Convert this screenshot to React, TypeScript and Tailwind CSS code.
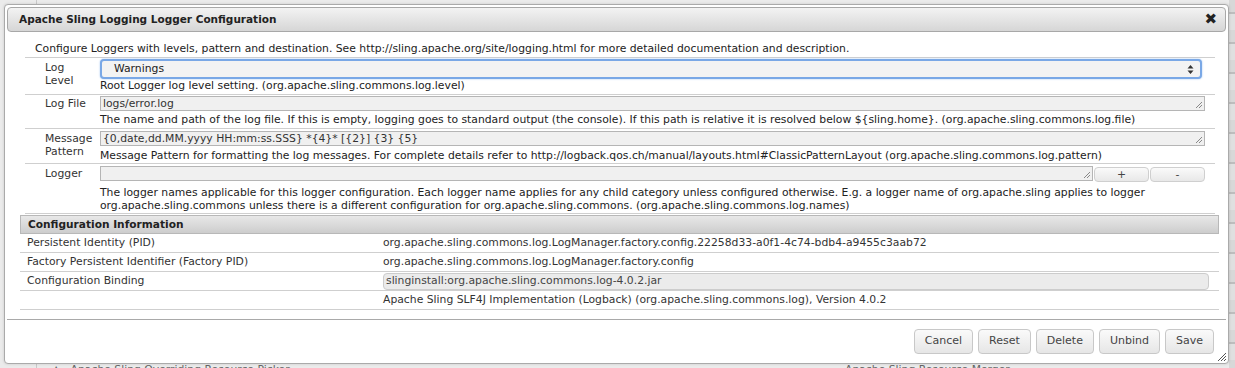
import React from 'react';

const Grip = () => (
  <svg width="9" height="9" viewBox="0 0 9 9" className="absolute right-[1px] bottom-[1px]">
    <path d="M8 2 L2 8 M8 5 L5 8" stroke="#888" strokeWidth="1" />
  </svg>
);

const TextBox = ({ value, className = '' }: { value?: string; className?: string }) => (
  <div className={`relative h-[15px] border border-[#b5b5b5] bg-[#f0f0f0] pl-[2px] leading-[13px] text-[#333] ${className}`}>
    {value}
    <Grip />
  </div>
);

const Btn = ({ label }: { label: string }) => (
  <button className="h-[25px] px-[10px] rounded-[4px] border border-[#c8c8c8] bg-gradient-to-b from-[#fafafa] to-[#e6e6e6] text-[#444] text-[11px]">
    {label}
  </button>
);

const Row = ({ label, labelPad, children }: { label: React.ReactNode; labelPad: string; children: React.ReactNode }) => (
  <div className="flex border-t border-[#cfcfcf]">
    <div className={`w-[75px] shrink-0 pl-[20px] leading-[13px] text-[#333] ${labelPad}`}>{label}</div>
    <div className="flex-1 pr-[10px]">{children}</div>
  </div>
);

const InfoRow = ({ label, children }: { label: string; children?: React.ReactNode }) => (
  <div className="flex border-b border-[#cfcfcf] h-[19px] items-center">
    <div className="w-[363px] pl-[7px] text-[#333]">{label}</div>
    <div className="flex-1 text-[#333]">{children}</div>
  </div>
);

export default function App() {
  return (
    <div className="relative w-[1235px] h-[368px] overflow-hidden bg-[#ebebeb] font-['DejaVu_Sans',sans-serif] text-[10.8px]">
      {/* page behind the dialog */}
      <div className="absolute left-[36px] top-0 w-px h-full bg-[#c9c9c9]" />
      <div className="absolute right-0 top-0 w-[6px] h-full bg-[repeating-linear-gradient(to_bottom,#d8d8d8_0px,#d8d8d8_12px,#bdbdbd_12px,#bdbdbd_14px,#e0e0e0_14px,#e0e0e0_30px)]" />
      <div className="absolute left-[52px] top-[363px] text-[#666] whitespace-nowrap leading-[13px]">▲ &nbsp; Apache Sling Overriding Resource Picker</div>
      <div className="absolute left-[845px] top-[363px] text-[#666] whitespace-nowrap leading-[13px]">Apache Sling Resource Merger</div>

      {/* dialog */}
      <div className="absolute left-[4px] top-[4px] w-[1225px] h-[360px] bg-white border border-[#aaaaaa] rounded-[4px] p-[2px] flex flex-col shadow-[0_0_3px_rgba(0,0,0,0.15)]">
        <div className="h-[25px] shrink-0 flex items-center justify-between rounded-[4px] border border-[#a8a8a8] bg-gradient-to-b from-[#f3f3f3] to-[#d6d6d6] pl-[11px] pr-[8px]">
          <span className="font-bold text-[10.5px] text-[#222]">Apache Sling Logging Logger Configuration</span>
          <span className="text-[15px] font-bold text-[#222] leading-none">✖</span>
        </div>

        <div className="pl-[18px] pr-[11px]">
          <div className="pl-[10px] pt-[10px] pb-[2px] leading-[13px] text-[#222]">
            Configure Loggers with levels, pattern and destination. See http://sling.apache.org/site/logging.html for more detailed documentation and description.
          </div>

          <Row label={<>Log<br />Level</>} labelPad="pt-[3px]">
            <div className="pt-[1px]">
              <div className="h-[20px] mr-[3px] rounded-[4px] border-2 border-[#7aa8e6] shadow-[0_0_2px_#9cc2f0] bg-[#f3f3f3] flex items-center justify-between pl-[12px] pr-[6px] text-[#222]">
                <span>Warnings</span>
                <svg width="7" height="11" viewBox="0 0 7 11">
                  <path d="M3.5 1 L6.5 4.5 L0.5 4.5 Z M3.5 10 L6.5 6.5 L0.5 6.5 Z" fill="#333" />
                </svg>
              </div>
            </div>
            <div className="leading-[13px] pb-[2px] text-[#222]">Root Logger log level setting. (org.apache.sling.commons.log.level)</div>
          </Row>

          <Row label="Log File" labelPad="pt-[2px]">
            <div className="pt-[1px]"><TextBox value="logs/error.log" /></div>
            <div className="leading-[13px] pt-[2px] pb-[2px] text-[#222]">
              The name and path of the log file. If this is empty, logging goes to standard output (the console). If this path is relative it is resolved below ${'{'}sling.home{'}'}. (org.apache.sling.commons.log.file)
            </div>
          </Row>

          <Row label={<>Message<br />Pattern</>} labelPad="pt-[3px]">
            <div className="pt-[2px]"><TextBox value="{0,date,dd.MM.yyyy HH:mm:ss.SSS} *{4}* [{2}] {3} {5}" /></div>
            <div className="leading-[13px] pt-[3px] pb-[1px] text-[#222]">
              Message Pattern for formatting the log messages. For complete details refer to http://logback.qos.ch/manual/layouts.html#ClassicPatternLayout (org.apache.sling.commons.log.pattern)
            </div>
          </Row>

          <Row label="Logger" labelPad="pt-[3px]">
            <div className="pt-[2px] flex gap-[1px]">
              <TextBox className="flex-1" />
              <button className="w-[55px] h-[15px] mt-[1px] rounded-[4px] border border-[#cfcfcf] bg-gradient-to-b from-[#fafafa] to-[#e8e8e8] text-[#444] leading-[11px]">+</button>
              <button className="w-[55px] h-[15px] mt-[1px] rounded-[4px] border border-[#cfcfcf] bg-gradient-to-b from-[#fafafa] to-[#e8e8e8] text-[#444] leading-[11px]">-</button>
            </div>
            <div className="leading-[13px] pt-[4px] pb-[1px] text-[#222]">
              The logger names applicable for this logger configuration. Each logger name applies for any child category unless configured otherwise. E.g. a logger name of org.apache.sling applies to logger org.apache.sling.commons unless there is a different configuration for org.apache.sling.commons. (org.apache.sling.commons.log.names)
            </div>
          </Row>
          <div className="border-t border-[#cfcfcf]" />
        </div>

        <div className="ml-[13px] mr-[7px] mt-[1px]">
          <div className="h-[19px] flex items-center pl-[7px] font-bold text-[10.6px] text-[#222] border border-[#b8b8b8] bg-gradient-to-b from-[#e8e8e8] to-[#cdcdcd]">
            Configuration Information
          </div>
          <InfoRow label="Persistent Identity (PID)">org.apache.sling.commons.log.LogManager.factory.config.22258d33-a0f1-4c74-bdb4-a9455c3aab72</InfoRow>
          <InfoRow label="Factory Persistent Identifier (Factory PID)">org.apache.sling.commons.log.LogManager.factory.config</InfoRow>
          <InfoRow label="Configuration Binding">
            <div className="h-[17px] mr-[10px] rounded-[4px] border border-[#cccccc] bg-[#ebebeb] pl-[2px] flex items-center text-[#444]">
              slinginstall:org.apache.sling.commons.log-4.0.2.jar
            </div>
          </InfoRow>
          <InfoRow label="">Apache Sling SLF4J Implementation (Logback) (org.apache.sling.commons.log), Version 4.0.2</InfoRow>
        </div>

        <div className="mt-[9px] border-t border-[#a9a9a9] flex justify-end gap-[5px] pt-[9px] pr-[12px]">
          <Btn label="Cancel" />
          <Btn label="Reset" />
          <Btn label="Delete" />
          <Btn label="Unbind" />
          <Btn label="Save" />
        </div>

        <svg width="12" height="12" viewBox="0 0 12 12" className="absolute right-[1px] bottom-[1px]">
          <path d="M11 3 L3 11 M11 6 L6 11 M11 9 L9 11" stroke="#555" strokeWidth="1" />
        </svg>
      </div>
    </div>
  );
}
